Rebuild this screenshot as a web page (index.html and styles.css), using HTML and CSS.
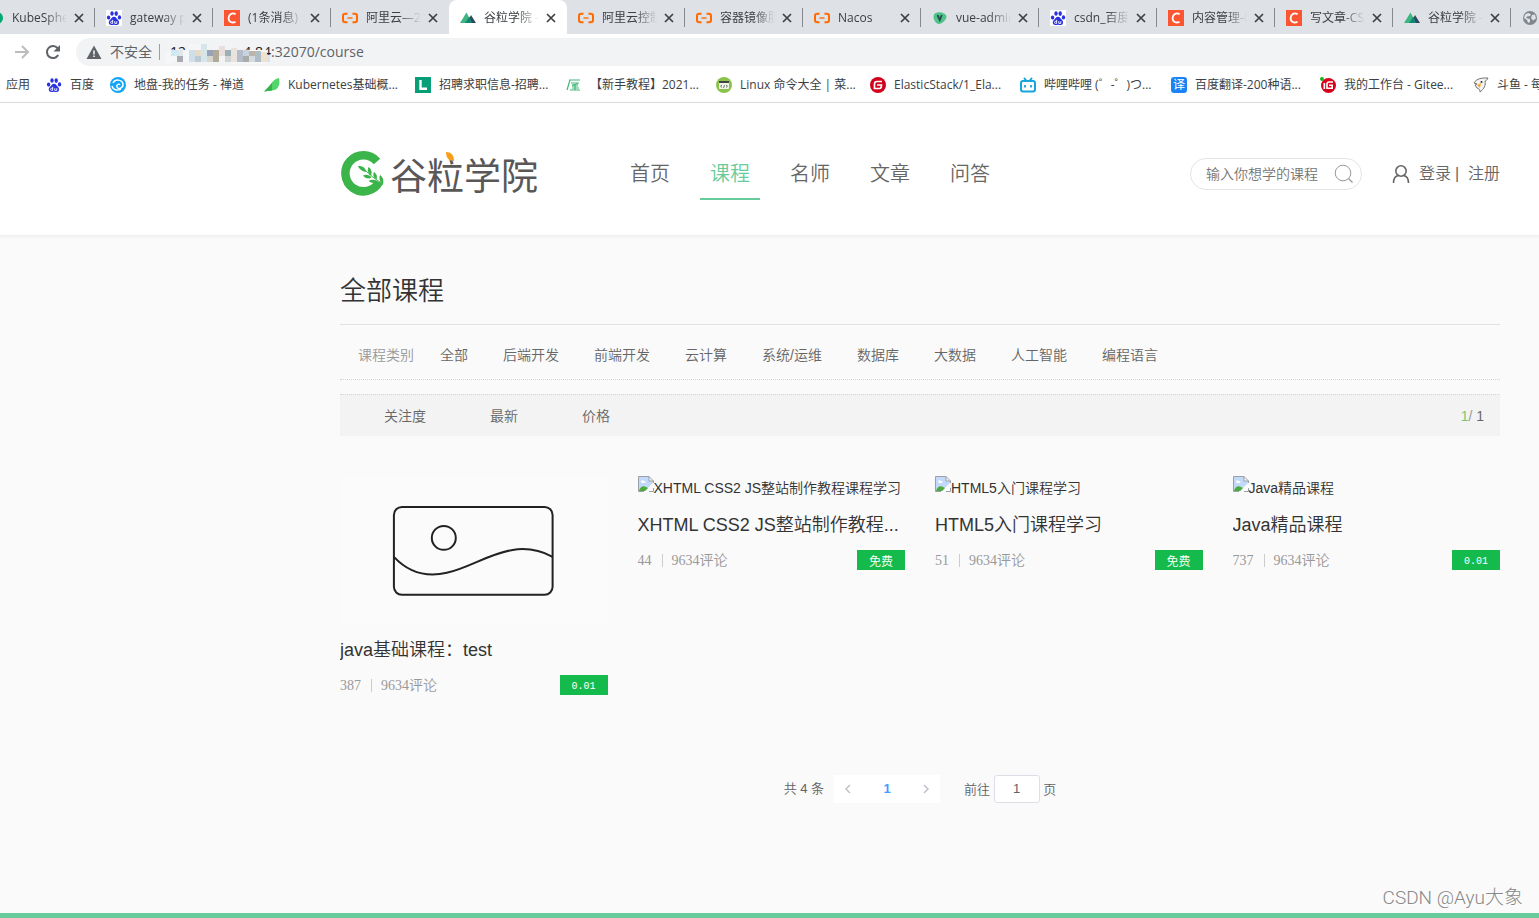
FILE: index.html
```
<!DOCTYPE html>
<html lang="zh-CN">
<head>
<meta charset="utf-8">
<title>谷粒学院</title>
<link rel="stylesheet" href="styles.css">
</head>
<body>
<svg class="sprite" width="0" height="0" aria-hidden="true">
  <symbol id="i-paw" viewBox="0 0 16 16"><g fill="#2932e1"><ellipse cx="2.6" cy="7.6" rx="1.7" ry="2.1"/><ellipse cx="6" cy="3.5" rx="1.7" ry="2.3"/><ellipse cx="10.2" cy="3.6" rx="1.7" ry="2.3"/><ellipse cx="13.5" cy="7.4" rx="1.7" ry="2.1"/><path d="M8 6.8c2 0 2.700 2 4 3.300 1.800 1.700 1.400 4.900-1.200 4.900-1 0-1.800-.3-2.800-.3s-1.800.3-2.800.3c-2.600 0-3.200-3.200-1.300-4.900C5.300 8.800 6 6.800 8 6.800z"/></g><path d="M6.700 9.800v3.600H5.600a1 1 0 0 1 0-2.100h1.100M8.800 11.200v2.200h2v-2.200" fill="none" stroke="#fff" stroke-width=".9"/></symbol>
  <symbol id="i-csdn" viewBox="0 0 16 16"><path fill="#fc5531" d="M0 0h16v16H0z"/><path d="M11.600 4.200C8.500 2.300 4.800 4 4.600 8c-.1 4 3.500 5.600 6.900 3.700" fill="none" stroke="#fff" stroke-width="1.800"/></symbol>
  <symbol id="i-ali" viewBox="0 0 16 16"><path d="M5.500 3.700H3.200Q1 3.700 1 5.900v4.200q0 2.200 2.200 2.200h2.300M10.500 3.700h2.300Q15 3.700 15 5.900v4.200q0 2.200-2.200 2.200h-2.300" fill="none" stroke="#ff6a00" stroke-width="2"/><path fill="#ff6a00" d="M5.500 7.300h5v1.400h-5z"/></symbol>
  <symbol id="i-nuxt" viewBox="0 0 16 16"><path fill="#3fb57f" d="M0 13 6.500 2.500 12 13z"/><path fill="#2f495e" d="m7 13 4-8 5 8z"/><path fill="#108775" d="m5 13 4.500-6.500L12 13z"/></symbol>
  <symbol id="i-vue" viewBox="0 0 16 16"><path fill="#4fc38a" d="M2 4.500C4 .5 14 2 14.500 6.500c.3 3-5 8-8 7.500C3 13.500.5 7.500 2 4.500z"/><path d="m5.500 5 2.300 5 2-5" fill="none" stroke="#244c4a" stroke-width="1.800"/></symbol>
  <symbol id="i-globe" viewBox="0 0 16 16"><circle cx="8" cy="8" r="7" fill="#80868b"/><path fill="#dee1e6" d="M3 4.500 6 3l3 1-1 2-3 .5-1 1.500 4 1v3l-2 1-1-3-3-2zM10 5l3-.5 1 4-3 2-2-2.500z"/></symbol>
  <symbol id="i-x" viewBox="0 0 10 10"><path d="m1 1 8 8m0-8L1 9" stroke="#3c4043" stroke-width="1.700"/></symbol>
  <symbol id="i-broken" viewBox="0 0 16 16"><path fill="#c3d9f9" d="M1 1h10v4h4v2L7 15H1z"/><path fill="#4daa3e" d="M1 15c1-4 4-6 7-4l2 1-3 3z"/><path fill="#fff" d="M3 6c0-2 2-2 3-1 2 0 2 2 0 2H4z"/><path d="M6 15.500H.5V.5h10.500l4.500 4.500v2M11 .5V5h4.500M11 15.500h4.500V12" fill="none" stroke="#9aa0a8"/></symbol>
</svg>

<div class="browser">
  <div class="tabs">
    <div class="tab"><svg class="ico"><circle cx="9" cy="8" r="6" fill="#00a971"/></svg><span class="tab-title">KubeSphere</span><button class="close" aria-label="关闭"><svg><use href="#i-x"/></svg></button></div>
    <div class="tab"><svg class="ico on-white"><use href="#i-paw"/></svg><span class="tab-title">gateway p</span><button class="close" aria-label="关闭"><svg><use href="#i-x"/></svg></button></div>
    <div class="tab"><svg class="ico"><use href="#i-csdn"/></svg><span class="tab-title">(1条消息)</span><button class="close" aria-label="关闭"><svg><use href="#i-x"/></svg></button></div>
    <div class="tab"><svg class="ico"><use href="#i-ali"/></svg><span class="tab-title">阿里云—2</span><button class="close" aria-label="关闭"><svg><use href="#i-x"/></svg></button></div>
    <div class="tab active"><svg class="ico"><use href="#i-nuxt"/></svg><span class="tab-title">谷粒学院 -</span><button class="close" aria-label="关闭"><svg><use href="#i-x"/></svg></button></div>
    <div class="tab"><svg class="ico"><use href="#i-ali"/></svg><span class="tab-title">阿里云控制</span><button class="close" aria-label="关闭"><svg><use href="#i-x"/></svg></button></div>
    <div class="tab"><svg class="ico"><use href="#i-ali"/></svg><span class="tab-title">容器镜像服</span><button class="close" aria-label="关闭"><svg><use href="#i-x"/></svg></button></div>
    <div class="tab"><svg class="ico"><use href="#i-ali"/></svg><span class="tab-title">Nacos</span><button class="close" aria-label="关闭"><svg><use href="#i-x"/></svg></button></div>
    <div class="tab"><svg class="ico"><use href="#i-vue"/></svg><span class="tab-title">vue-admin</span><button class="close" aria-label="关闭"><svg><use href="#i-x"/></svg></button></div>
    <div class="tab"><svg class="ico on-white"><use href="#i-paw"/></svg><span class="tab-title">csdn_百度</span><button class="close" aria-label="关闭"><svg><use href="#i-x"/></svg></button></div>
    <div class="tab"><svg class="ico"><use href="#i-csdn"/></svg><span class="tab-title">内容管理-C</span><button class="close" aria-label="关闭"><svg><use href="#i-x"/></svg></button></div>
    <div class="tab"><svg class="ico"><use href="#i-csdn"/></svg><span class="tab-title">写文章-CS</span><button class="close" aria-label="关闭"><svg><use href="#i-x"/></svg></button></div>
    <div class="tab"><svg class="ico"><use href="#i-nuxt"/></svg><span class="tab-title">谷粒学院 -</span><button class="close" aria-label="关闭"><svg><use href="#i-x"/></svg></button></div>
    <div class="tab"><svg class="ico"><use href="#i-globe"/></svg></div>
  </div>
  <div class="toolbar">
    <button class="tool" aria-label="前进"><svg width="16" height="16"><path d="M1 8h13M8 2l6 6-6 6" fill="none" stroke="#babcbe" stroke-width="2"/></svg></button>
    <button class="tool" aria-label="刷新"><svg width="16" height="16"><path d="M13.200 11A6 6 0 1 1 12.600 4.200L14 6" fill="none" stroke="#5f6368" stroke-width="2"/><path fill="#5f6368" d="M15 1v6.500H8.500z"/></svg></button>
    <div class="omnibox">
      <svg width="16" height="16"><path fill="#5f6368" d="M8 1.500 15.500 15H.5z"/><path fill="#f1f3f4" d="M7.200 6.500h1.600v4H7.200zM7.200 11.500h1.600v1.600H7.200z"/></svg>
      <span class="secure">不安全</span>
      <span class="host"><span>12</span><span>4.84</span>
        <svg class="mosaic" width="106" height="24" shape-rendering="crispEdges">
          <path fill="#f4f6f7" d="M0 10h6v12H0zM6 8h18v12H6zM24 2h18v8H24zM66 8h36v14H66z"/>
          <path fill="#cdeaf2" d="M6 8h6v6H6z"/><path fill="#dfe7ea" d="M12 8h6v6h-6z"/><path fill="#a8abb0" d="M12 14h6v6h-6z"/>
          <path fill="#cfdfea" d="M24 8h6v12h-6z"/><path fill="#e6dac8" d="M30 8h6v6h-6z"/><path fill="#bccbd3" d="M30 14h6v6h-6z"/><path fill="#d6e5e8" d="M36 2h6v18h-6z"/><path fill="#98a3b5" d="M42 8h6v6h-6z"/><path fill="#d7d6ce" d="M42 14h6v6h-6z"/><path fill="#b1aa98" d="M48 8h6v12h-6z"/><path fill="#e8dfdc" d="M54 4h6v10h-6z"/><path fill="#f2f3f4" d="M54 14h6v6h-6z"/><path fill="#9bb0b6" d="M60 8h6v6h-6z"/><path fill="#d2d4d5" d="M60 14h6v6h-6z"/><path fill="#e9e2dd" d="M66 6h6v14h-6z"/><path fill="#b3bcc8" d="M72 8h6v12h-6z"/><path fill="#c4d3dd" d="M78 8h6v6h-6z"/><path fill="#a9aba9" d="M78 14h6v6h-6z"/><path fill="#bcb3aa" d="M84 9h6v5h-6z"/><path fill="#d2dbe0" d="M84 14h6v6h-6z"/><path fill="#aebdc6" d="M90 9h6v11h-6z"/><path fill="#f0e2cf" d="M96 10h6v10h-6z"/><path fill="#d4e5ef" d="M102 13h3v7h-3z"/>
        </svg>
      </span><span class="path">:32070/course</span>
    </div>
  </div>
  <nav class="bookmarks">
    <a href="#">应用</a>
    <a href="#"><svg class="ico"><use href="#i-paw"/></svg>百度</a>
    <a href="#"><svg class="ico"><circle cx="8" cy="8" r="8" fill="#12a5f8"/><path d="M3 6c2-4 9-4 10 1 .5 4-5 6-6 3-1-2 2-4 3-2M2 9c1 4 5 5 9 3" fill="none" stroke="#fff" stroke-width="1.500"/></svg>地盘-我的任务 - 禅道</a>
    <a href="#"><svg class="ico"><path fill="#53d669" d="M0 14.500C6 12 7 2 15 1c1 4 1 12-7 12.500z"/><path fill="#36b24b" d="M0 14.500 8 6v7.500z"/></svg>Kubernetes基础概...</a>
    <a href="#"><svg class="ico"><path fill="#079e78" d="M0 0h16v16H0z"/><path d="M5.500 3v8.800H12" fill="none" stroke="#fff" stroke-width="2.400"/></svg>招聘求职信息-招聘...</a>
    <a href="#"><svg class="ico"><path d="M3 3h11M4 3 1 13M5 6h8M6 8l6-1M6 9h6M9 8v5M4 13h10M6 11h7" fill="none" stroke="#43b779" stroke-width="1.200"/></svg>【新手教程】2021...</a>
    <a href="#"><svg class="ico"><circle cx="8" cy="8" r="8" fill="#8bc34a"/><rect x="3" y="4" width="10" height="8" rx="1" fill="#eff5e8"/><path fill="#444" d="M3 4h10v2H3z"/><path d="m6 8-1.500 1.200L6 10.500M10 8l1.500 1.200L10 10.500M8.500 8l-1 3" fill="none" stroke="#555" stroke-width=".8"/></svg>Linux 命令大全 | 菜...</a>
    <a href="#"><svg class="ico"><circle cx="8" cy="8" r="8" fill="#d0021b"/><path d="M12 4.500H7Q4.500 4.500 4.500 7v4.500H9.500Q11.500 11.500 11.500 8H7" fill="none" stroke="#fff" stroke-width="1.700"/></svg>ElasticStack/1_Ela...</a>
    <a href="#"><svg class="ico"><rect x="1" y="4" width="14" height="10.500" rx="2" fill="none" stroke="#17a5dc" stroke-width="2"/><path d="m4 .8 2.500 3M12 .8l-2.500 3M5 8v2.500M11 8v2.500" stroke="#17a5dc" stroke-width="1.800"/></svg>哔哩哔哩 (゜-゜)つ...</a>
    <a href="#"><span class="ico fanyi">译</span>百度翻译-200种语...</a>
    <a href="#"><svg class="ico"><circle cx="8.500" cy="8.500" r="7.500" fill="#d8001b"/><circle cx="2" cy="2" r="2" fill="#1bb11b"/><path fill="#fff" d="M3.500 6h1.700v6H3.500z"/><path d="M13 5H9Q7 5 7 7.500v3.700h5.200V8.300H9" fill="none" stroke="#fff" stroke-width="1.600"/></svg>我的工作台 - Gitee...</a>
    <a href="#"><svg class="ico"><path fill="#f3f3f3" stroke="#77706d" d="M1 6c3-5 8-5 14-5-1 2-2 3-3 3 1 4-1 8-5 11 0-3-1-3-3-4L2 8l2-1z"/><path fill="#f4a62a" d="m4 8 4-2-1 5z"/><circle cx="8.500" cy="5" r="1" fill="#333"/></svg>斗鱼 - 每个人</a>
  </nav>
</div>

<header class="site-header">
  <a class="logo" href="#">
    <svg width="45" height="46" viewBox="0 0 45 46"><path d="M37 10.500A18 18 0 1 0 39.200 31" fill="none" stroke="#3bb44a" stroke-width="8.500"/><g fill="#3bb44a"><path d="M18 15c4-.5 7.500 1.500 8.500 6-3.500-.5-7-2-8.500-6zM28.500 16c3 2 4 5.500 2.500 8.500-3-2-4-5-2.500-8.500zM23 24.500c3-1.500 7-.5 8.500 2-2.500 2-6.500 1-8.500-2zM34 21c3 2 3.500 5 2.500 7.500-3-1.500-4-4.500-2.500-7.500zM28.500 30c3-2 6.500-1.500 8.500.5-2 2.500-6 1.500-8.500-.5zM40 24c3 2 4 5 3 9.500-3-2-4.500-6-3-9.500z"/></g><path d="M25 19c5 5 10 9 18 14" fill="none" stroke="#3bb44a"/></svg>
    <span class="logo-text">谷粒学院<svg class="seed" width="10" height="10"><path fill="#f6a01a" d="M1 0c5 0 8 3 8 9-5 0-8-3-8-9z"/></svg></span>
  </a>
  <nav class="main-nav">
    <a href="#">首页</a>
    <a href="#" class="current">课程</a>
    <a href="#">名师</a>
    <a href="#">文章</a>
    <a href="#">问答</a>
  </nav>
  <form class="search">
    <input type="text" placeholder="输入你想学的课程" aria-label="输入你想学的课程">
    <button type="button" aria-label="搜索"><svg width="20" height="20"><circle cx="9" cy="9" r="7.800" fill="none" stroke="#999"/><path d="m14.500 14.500 4 4" stroke="#999" stroke-width="1.300"/></svg></button>
  </form>
  <div class="account">
    <svg width="18" height="20"><circle cx="9" cy="7" r="5.200" fill="none" stroke="#666" stroke-width="1.600"/><path d="M1.500 19c0-4 2-7 5-7.500M16.500 19c0-4-2-7-5-7.500" fill="none" stroke="#666" stroke-width="1.600"/></svg>
    <a class="login" href="#">登录</a><span class="bar">|</span><a href="#">注册</a>
  </div>
</header>

<main class="content">
  <h1>全部课程</h1>
  <div class="categories">
    <span class="label">课程类别</span>
    <a href="#">全部</a><a href="#">后端开发</a><a href="#">前端开发</a><a href="#">云计算</a><a href="#">系统/运维</a><a href="#">数据库</a><a href="#">大数据</a><a href="#">人工智能</a><a href="#">编程语言</a>
  </div>
  <div class="sort">
    <a href="#">关注度</a><a href="#">最新</a><a href="#">价格</a>
    <span class="pages"><b>1</b>/ <i>1</i></span>
  </div>
  <div class="courses">
    <article>
      <svg class="cover" viewBox="0 0 268 149"><path fill="#fbfbfb" d="M0 0h268v149H0z"/><g fill="none" stroke="#222" stroke-width="2"><rect x="54" y="31" width="159" height="88" rx="8"/><circle cx="104" cy="62" r="12"/><path d="M54 81c14 15 31 21 53 16C140 90 172 59 213 81"/></g></svg>
      <h2>java基础课程：test</h2>
      <div class="meta"><span class="views">387</span><span>9634评论</span><span class="price num">0.01</span></div>
    </article>
    <article>
      <div class="alt"><svg class="ico"><use href="#i-broken"/></svg>XHTML CSS2 JS整站制作教程课程学习</div>
      <h2>XHTML CSS2 JS整站制作教程...</h2>
      <div class="meta"><span class="views">44</span><span>9634评论</span><span class="price">免费</span></div>
    </article>
    <article>
      <div class="alt"><svg class="ico"><use href="#i-broken"/></svg>HTML5入门课程学习</div>
      <h2>HTML5入门课程学习</h2>
      <div class="meta"><span class="views">51</span><span>9634评论</span><span class="price">免费</span></div>
    </article>
    <article>
      <div class="alt"><svg class="ico"><use href="#i-broken"/></svg>Java精品课程</div>
      <h2>Java精品课程</h2>
      <div class="meta"><span class="views">737</span><span>9634评论</span><span class="price num">0.01</span></div>
    </article>
  </div>
  <div class="pager">
    <span>共 4 条</span>
    <div class="pager-buttons">
      <button aria-label="上一页"><svg width="8" height="10"><path d="M6 1 2 5l4 4" fill="none" stroke="#c0c4cc" stroke-width="1.600"/></svg></button>
      <button class="on">1</button>
      <button aria-label="下一页"><svg width="8" height="10"><path d="m2 1 4 4-4 4" fill="none" stroke="#c0c4cc" stroke-width="1.600"/></svg></button>
    </div>
    <label class="jump">前往 <input type="text" value="1"> 页</label>
  </div>
</main>
<footer class="site-footer"><span class="watermark">CSDN @Ayu大象</span></footer>
</body>
</html>
```

FILE: styles.css
```
* { box-sizing: border-box; }

body {
  margin: 0;
  min-height: 100vh;
  display: flex;
  flex-direction: column;
  overflow: hidden;
  background: #fafafa;
  color: #666;
  font: 350 14px/20px "Liberation Sans", "Noto Sans CJK SC", sans-serif;
}

a { color: inherit; text-decoration: none; }
button { padding: 0; border: 0; background: none; font: inherit; color: inherit; }
svg { display: block; flex: none; }
.sprite { position: absolute; }
.ico { width: 16px; height: 16px; flex: none; }

/* Browser window */
.browser {
  overflow: hidden;
  background: #fff;
  border-bottom: 1px solid #dcdcdc;
  color: #3c4043;
  font: 12px/16px "Open Sans", "Noto Sans CJK SC", sans-serif;
  white-space: nowrap;
}
.tabs { display: flex; height: 34px; margin-left: -23px; background: #dee1e6; }
.tab {
  flex: 0 0 118px;
  display: flex;
  align-items: center;
  padding: 1px 0 0 11px;
  background: linear-gradient(#85888d, #85888d) right 8px / 1px 19px no-repeat;
}
.tab.active { background: #fff; border-radius: 8px 8px 0 0; }
.tab:has(+ .active) { background: none; }
.on-white { background: #fff; }
.tab-title {
  width: 55px;
  margin-left: 8px;
  overflow: hidden;
  -webkit-mask-image: linear-gradient(90deg, #000 60%, transparent);
  mask-image: linear-gradient(90deg, #000 60%, transparent);
}
.close { margin-left: 7px; }
.close svg { width: 10px; height: 10px; }
.toolbar { display: flex; align-items: center; height: 32px; padding: 4px 0 0 14px; }
.tool { width: 31px; }
.omnibox {
  flex: 1;
  display: flex;
  align-items: center;
  height: 28px;
  padding-left: 10px;
  border-radius: 14px 0 0 14px;
  background: #f1f3f4;
  color: #5f6368;
  font-size: 14px;
}
.secure { margin-left: 8px; padding-right: 7px; border-right: 1px solid #9aa0a6; }
.host { position: relative; display: flex; justify-content: space-between; width: 111px; padding-left: 10px; color: #202124; }
.mosaic { position: absolute; left: 5px; top: -2px; }
.bookmarks {
  display: grid;
  grid-template-columns: 40px 64px 154px 151px 151px 150px 154px 150px 151px 149px 153px 100px;
  height: 36px;
  padding: 1px 0 0 6px;
}
.bookmarks a { display: flex; align-items: center; gap: 8px; }
.fanyi { border-radius: 3px; background: #1b83f5; color: #fff; text-align: center; }

/* Site header */
.site-header {
  display: flex;
  align-items: center;
  height: 133px;
  padding: 10px 39px 0 340px;
  background: #fff;
  border-bottom: 1px solid #f0f0f0;
  box-shadow: 0 1px 3px rgba(0, 0, 0, .05);
}
.logo { display: flex; align-items: center; gap: 5px; width: 280px; color: #595757; }
.logo-text { position: relative; font: 400 37px/46px "Noto Sans CJK SC", sans-serif; }
.seed { position: absolute; left: 55px; top: 1px; }
.main-nav { display: flex; gap: 20px; font-size: 20px; line-height: 48px; }
.main-nav a { width: 60px; padding-top: 2px; border-bottom: 2px solid transparent; text-align: center; }
.main-nav .current { border-color: #68cb9b; color: #68cb9b; }
.search {
  display: flex;
  align-items: center;
  width: 172px;
  height: 32px;
  margin-left: auto;
  padding-left: 15px;
  border: 1px solid #e5e5e5;
  border-radius: 16px;
}
.search input { width: 120px; padding: 0; border: 0; outline: 0; background: none; font: inherit; }
.search button { margin-left: 8px; }
.account { display: flex; align-items: center; margin-left: 30px; font-size: 16px; }
.login { margin-left: 9px; }
.bar { width: 17px; padding-left: 4px; }

/* Course list */
.content { flex: 1; padding: 35px 39px 0 340px; }
h1 {
  margin: 0;
  padding-bottom: 13px;
  border-bottom: 1px solid #e1e1e1;
  color: #333;
  font-size: 26px;
  font-weight: 350;
  line-height: 40px;
}
.categories { display: flex; gap: 35px; padding: 20px 18px 14px; border-bottom: 1px dotted #d5d5d5; }
.categories .label { margin-right: -9px; color: #999; }
.sort {
  display: flex;
  gap: 64px;
  margin-top: 14px;
  padding: 11px 16px 10px 44px;
  border-top: 1px dotted #d5d5d5;
  background: #f3f3f3;
}
.pages { margin-left: auto; color: #999; }
.pages b { color: #7cc576; font-weight: 400; }
.pages i { color: #666; font-style: normal; }
.courses { display: grid; grid-template-columns: repeat(4, minmax(0, 1fr)); gap: 30px; margin-top: 40px; }
.cover { width: 100%; }
.alt { display: flex; height: 24px; color: #333; line-height: 24px; white-space: nowrap; }
h2 {
  margin: 10px 0;
  overflow: hidden;
  color: #333;
  font-size: 18px;
  font-weight: 350;
  line-height: 30px;
  text-overflow: ellipsis;
  white-space: nowrap;
}
.meta {
  display: flex;
  color: #999;
  font-family: "Liberation Serif", "Noto Sans CJK SC", serif;
  line-height: 22px;
}
.views { position: relative; padding-right: 20px; }
.views::after { content: ""; position: absolute; right: 9px; top: 4px; height: 13px; border-left: 1px solid #ccc; }
.price { width: 48px; height: 20px; margin-left: auto; background: #14bb4c; color: #fff; font-size: 12px; line-height: 24px; text-align: center; }
.num { font: 10px/24px "Liberation Mono", monospace; }

.pager { display: flex; align-items: center; justify-content: center; margin-top: 78px; color: #606266; font-size: 13px; }
.pager-buttons { display: flex; height: 28px; margin: 0 24px 0 10px; background: #fff; }
.pager-buttons button { display: flex; align-items: center; justify-content: center; width: 28px; }
.pager-buttons .on { width: 50px; color: #409eff; font-weight: 700; }
.jump input {
  width: 46px;
  height: 28px;
  padding: 0;
  border: 1px solid #dcdfe6;
  border-radius: 3px;
  background: #fff;
  color: #606266;
  font: inherit;
  text-align: center;
}

.site-footer { position: relative; height: 5px; background: #68cb9b; }
.watermark {
  position: absolute;
  right: 16px;
  bottom: 10px;
  color: #888;
  font-family: Roboto, "Noto Sans CJK SC", sans-serif;
  font-size: 19px;
  font-weight: 300;
  text-shadow: 1px 1px 1px #fff;
  white-space: nowrap;
}
```
